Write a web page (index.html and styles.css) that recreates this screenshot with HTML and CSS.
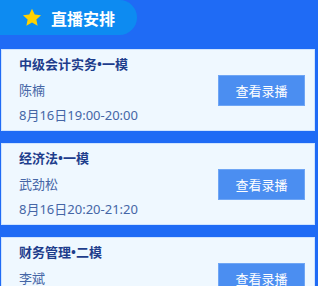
FILE: index.html
```
<!DOCTYPE html>
<html lang="zh">
<head>
    <meta charset="UTF-8">
    <meta name="viewport" content="width=device-width, initial-scale=1.0">
    <title>直播安排</title>
    <link rel="stylesheet" href="styles.css">
</head>
<body>
    <div class="panel">
        <div class="panel-head">
            <svg class="star" width="20" height="19" viewBox="0 0 24 23">
                <path d="M12 0.8l3.3 7 7.6 0.9-5.6 5.2 1.5 7.6L12 17.7l-6.8 3.8 1.5-7.6L1.1 8.7l7.6-0.9z" fill="#ffd200"/>
            </svg>
            <span>直播安排</span>
        </div>

        <div class="live-list">
            <div class="live-item">
                <div class="live-info">
                    <h4>中级会计实务•一模</h4>
                    <p>陈楠</p>
                    <p>8月16日19:00-20:00</p>
                </div>
                <button type="button">查看录播</button>
            </div>

            <div class="live-item">
                <div class="live-info">
                    <h4>经济法•一模</h4>
                    <p>武劲松</p>
                    <p>8月16日20:20-21:20</p>
                </div>
                <button type="button">查看录播</button>
            </div>

            <div class="live-item">
                <div class="live-info">
                    <h4>财务管理•二模</h4>
                    <p>李斌</p>
                    <p>8月16日21:40-22:40</p>
                </div>
                <button type="button">查看录播</button>
            </div>
        </div>
    </div>
</body>
</html>
```
FILE: styles.css
```
body {
    margin: 0;
    font-family: "Noto Sans", "Noto Sans CJK SC", sans-serif;
    background-color: #1f6bf5;
    overflow: hidden;
}

.panel {
    padding: 0 3px 0 1px;
}

.panel-head {
    display: inline-flex;
    align-items: center;
    height: 35px;
    width: 137px;
    box-sizing: border-box;
    margin-left: -1px;
    padding-left: 22px;
    background-color: #0d8bf1;
    border-radius: 0 18px 18px 0;
    color: #fff;
    font-size: 16px;
    font-weight: bold;
}

.star {
    margin-right: 9px;
}

.live-list {
    margin-top: 14px;
    display: flex;
    flex-direction: column;
    gap: 12px;
}

.live-item {
    display: flex;
    align-items: center;
    justify-content: space-between;
    height: 82px;
    box-sizing: border-box;
    padding: 0 9px 0 17px;
    background-color: #eff8ff;
    border: 1px solid #cfe4ff;
}

.live-info {
    align-self: flex-start;
    padding-top: 4px;
}

.live-info h4 {
    margin: 0 0 6px 0;
    color: #1e3d8c;
    font-size: 13px;
    line-height: 20px;
}

.live-info p {
    margin: 0 0 5px 0;
    color: #4566a6;
    font-size: 13px;
    line-height: 20px;
}

.live-info p:last-child {
    margin-bottom: 0;
}

button {
    width: 87px;
    height: 31px;
    background-color: #4b8ef1;
    border: 1px solid #6fa6f5;
    color: #fff;
    font-family: inherit;
    font-size: 13px;
    cursor: pointer;
}
```
